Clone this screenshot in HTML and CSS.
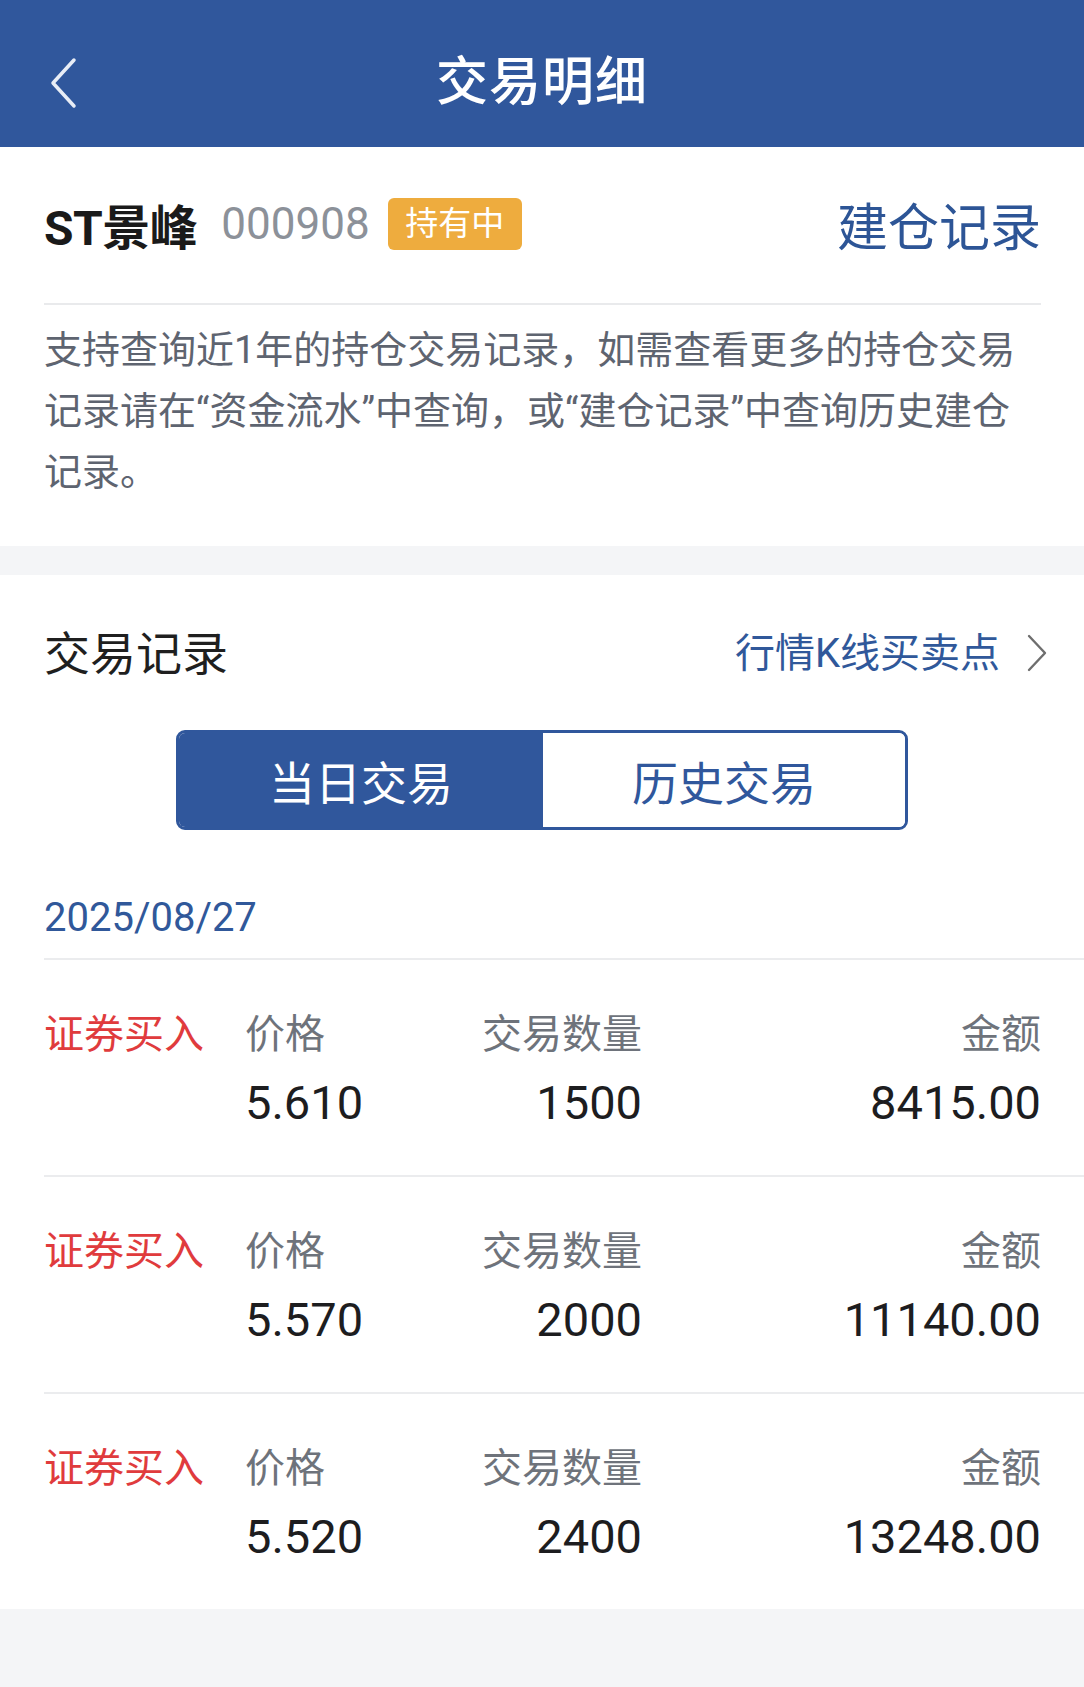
FILE: index.html
```html
<!DOCTYPE html>
<html lang="zh-CN">
<head>
<meta charset="utf-8">
<title>交易明细</title>
<link rel="stylesheet" href="styles.css">
</head>
<body>
<div class="page">
  <header class="topbar">
    <div class="topbar-left">
      <svg class="back" width="30" height="52" viewBox="0 0 30 52"><polyline points="25,3 4,26 25,49" fill="none" stroke="#e8edf6" stroke-width="3.5" stroke-linecap="round" stroke-linejoin="round"/></svg>
    </div>
    <h1 class="title">交易明细</h1>
    <div class="topbar-right"></div>
  </header>

  <section class="card info">
    <div class="stock-row">
      <span class="stock-name">ST景峰</span>
      <span class="stock-code">000908</span>
      <span class="badge">持有中</span>
      <span class="spacer"></span>
      <a class="link-big">建仓记录</a>
    </div>
    <p class="note">支持查询近1年的持仓交易记录，如需查看更多的持仓交易<br>记录请在“资金流水”中查询，或“建仓记录”中查询历史建仓<br>记录。</p>
  </section>

  <div class="band"></div>

  <section class="card records">
    <div class="rec-head">
      <span class="rec-title">交易记录</span>
      <span class="spacer"></span>
      <a class="kline">行情K线买卖点</a>
      <svg class="chev" width="22" height="38" viewBox="0 0 22 38"><polyline points="3,2 19,19 3,36" fill="none" stroke="#6e6e6e" stroke-width="2.4" stroke-linecap="round" stroke-linejoin="round"/></svg>
    </div>

    <div class="seg">
      <div class="seg-item active">当日交易</div>
      <div class="seg-item">历史交易</div>
    </div>

    <div class="list">
      <div class="date">2025/08/27</div>
      <div class="row">
        <span class="type">证券买入</span>
        <span class="lbl c2">价格</span>
        <span class="lbl c3">交易数量</span>
        <span class="lbl c4">金额</span>
        <span class="val c2">5.610</span>
        <span class="val c3">1500</span>
        <span class="val c4">8415.00</span>
      </div>
      <div class="row">
        <span class="type">证券买入</span>
        <span class="lbl c2">价格</span>
        <span class="lbl c3">交易数量</span>
        <span class="lbl c4">金额</span>
        <span class="val c2">5.570</span>
        <span class="val c3">2000</span>
        <span class="val c4">11140.00</span>
      </div>
      <div class="row">
        <span class="type">证券买入</span>
        <span class="lbl c2">价格</span>
        <span class="lbl c3">交易数量</span>
        <span class="lbl c4">金额</span>
        <span class="val c2">5.520</span>
        <span class="val c3">2400</span>
        <span class="val c4">13248.00</span>
      </div>
    </div>
  </section>
</div>
</body>
</html>
```

FILE: styles.css
```css
* { box-sizing: border-box; }
html, body {
  margin: 0;
  padding: 0;
  background: #f4f5f7;
}
body {
  font-family: Roboto, "Noto Sans CJK SC", sans-serif;
  color: #1e1e1e;
}
.page {
  width: 1084px;
  min-height: 1687px;
  background: #f4f5f7;
}

/* top bar */
.topbar {
  height: 147px;
  padding-top: 18px;
  background: #30579c;
  display: grid;
  grid-template-columns: 1fr auto 1fr;
  align-items: center;
}
.topbar-left {
  padding-left: 49px;
  display: flex;
  align-items: center;
}
.title {
  margin: 0;
  font-size: 52px;
  font-weight: 500;
  color: #ffffff;
  line-height: 60px;
  letter-spacing: 1px;
}

/* cards */
.card {
  background: #ffffff;
}
.spacer { flex: 1; }

.info {
  padding: 0 43px 0 44px;
}
.stock-row {
  height: 158px;
  padding-bottom: 2px;
  display: flex;
  align-items: center;
  border-bottom: 2px solid #e9eaec;
}
.stock-name {
  font-size: 48px;
  font-weight: 700;
  color: #1a1a1a;
  letter-spacing: -0.5px;
}
.stock-code {
  margin-left: 24px;
  font-size: 44px;
  color: #8c9199;
}
.badge {
  margin-left: 18px;
  width: 134px;
  height: 52px;
  border-radius: 6px;
  background: #eeac3e;
  color: #ffffff;
  font-size: 33px;
  line-height: 52px;
  text-align: center;
}
.link-big {
  font-size: 51px;
  color: #2d5596;
}
.note {
  margin: 0;
  padding: 15px 0 43px;
  font-size: 38px;
  line-height: 61px;
  color: #5e6470;
}

.band {
  height: 29px;
  background: #f4f5f7;
}

/* records */
.records {
  padding-top: 45px;
}
.rec-head {
  display: flex;
  align-items: center;
  height: 60px;
  padding: 0 36px 0 44px;
}
.rec-title {
  font-size: 46px;
  color: #1f1f1f;
}
.kline {
  font-size: 40px;
  color: #30589a;
}
.chev {
  margin-left: 26px;
  margin-top: 6px;
}

.seg {
  margin: 50px auto 0;
  width: 732px;
  height: 100px;
  border: 3px solid #30579c;
  border-radius: 9px;
  overflow: hidden;
  display: grid;
  grid-template-columns: 364px 1fr;
}
.seg-item {
  display: flex;
  align-items: center;
  justify-content: center;
  font-size: 46px;
  color: #30579c;
  background: #ffffff;
}
.seg-item.active {
  background: #30579c;
  color: #ffffff;
}

.list {
  margin-left: 44px;
  margin-top: 60px;
}
.date {
  font-size: 40px;
  line-height: 56px;
  color: #30589a;
  padding-bottom: 12px;
}
.row {
  border-top: 2px solid #ebecee;
  padding: 46px 43px 45px 0;
  display: grid;
  grid-template-columns: 201px 200px 197px 1fr;
  grid-template-rows: 50px 56px;
  row-gap: 18px;
  align-items: center;
}
.type {
  font-size: 40px;
  color: #e03b3d;
  grid-column: 1;
  grid-row: 1;
}
.lbl {
  font-size: 40px;
  color: #6e737b;
  grid-row: 1;
}
.val {
  font-size: 47px;
  color: #1d1d1f;
  grid-row: 2;
}
.c2 { grid-column: 2; text-align: left; }
.c3 { grid-column: 3; text-align: right; }
.c4 { grid-column: 4; text-align: right; }
```
